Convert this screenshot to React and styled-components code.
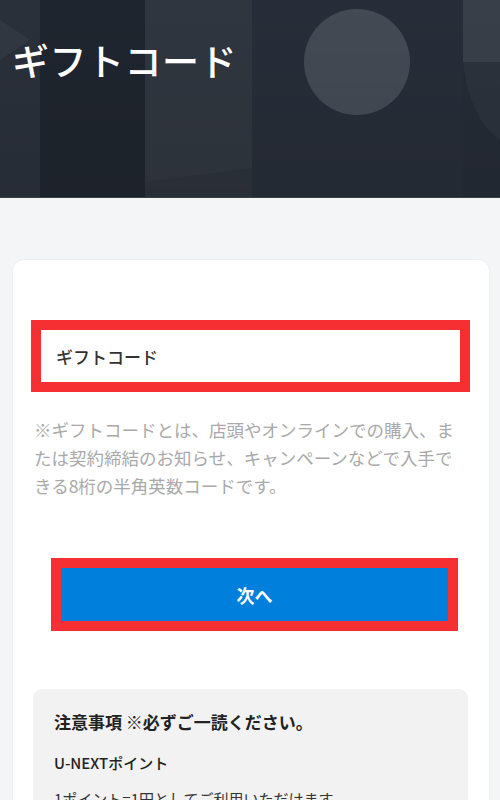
import React from "react";
import styled, { createGlobalStyle } from "styled-components";

const GlobalStyle = createGlobalStyle`
  body {
    margin: 0;
    background: #f4f5f7;
    font-family: "Noto Sans CJK JP", "Noto Sans", sans-serif;
  }
`;

const Page = styled.div`
  width: 500px;
  height: 800px;
  overflow: hidden;
  background: #f4f5f7;
`;

const Hero = styled.header`
  position: relative;
  height: 197px;
  background: #262c36;
  border-bottom: 1px solid #3a404a;
  overflow: hidden;
`;

const HeroArt = styled.svg`
  position: absolute;
  inset: 0;
`;

const HeroTitle = styled.h1`
  position: relative;
  margin: 0;
  padding: 34px 0 0 12px;
  font-size: 37px;
  font-weight: 500;
  line-height: 52px;
  color: #ffffff;
  letter-spacing: 0.5px;
`;

const Body = styled.main`
  padding: 61px 10px 0 12px;
`;

const Card = styled.section`
  background: #ffffff;
  border: 1px solid #eceef1;
  border-radius: 12px;
  padding: 60px 19px 40px 18px;
  display: flex;
  flex-direction: column;
`;

const Highlight = styled.div`
  border: 10px solid #f52f32;
  margin: ${(p) => p.$margin || "0"};
`;

const CodeInput = styled.div`
  height: 52px;
  background: #fff;
  display: flex;
  align-items: center;
  padding-left: 15px;
  font-size: 17px;
  font-weight: 500;
  color: #333;
`;

const Help = styled.p`
  margin: 24px 0 0 3px;
  width: 430px;
  font-size: 17.5px;
  line-height: 28px;
  color: #a9a9a9;
`;

const NextButton = styled.button`
  display: block;
  width: 100%;
  height: 53px;
  border: none;
  padding: 0;
  background: #0080dc;
  color: #fff;
  font-family: inherit;
  font-size: 18px;
  font-weight: 700;
  line-height: 50px;
`;

const Notes = styled.div`
  margin: 58px 2px 0 2px;
  background: #f2f2f2;
  border-radius: 9px;
  padding: 19px 21px;
`;

const NotesTitle = styled.h2`
  margin: 0;
  font-size: 17px;
  font-weight: 700;
  line-height: 28px;
  color: #222;
`;

const NotesHeading = styled.h3`
  margin: 15px 0 0;
  font-size: 15px;
  font-weight: 500;
  line-height: 24px;
  color: #222;
`;

const NotesText = styled.p`
  margin: 12px 0 0;
  font-size: 15px;
  line-height: 24px;
  color: #333;
`;

const App = () => {
  return (
    <Page>
      <GlobalStyle />
      <Hero>
        <HeroArt width="500" height="197" viewBox="0 0 500 197">
          <defs>
            <linearGradient id="fade" x1="0" y1="0" x2="0" y2="1">
              <stop offset="0" stopColor="#000" stopOpacity="0" />
              <stop offset="1" stopColor="#000" stopOpacity="0.08" />
            </linearGradient>
          </defs>
          <rect x="0" y="0" width="40" height="197" fill="#2a303a" />
          <path d="M0 20 L30 40 L0 60 Z" fill="#323842" />
          <rect x="40" y="0" width="105" height="197" fill="#1f252e" />
          <rect x="145" y="0" width="107" height="197" fill="#30363f" />
          <path d="M145 182 L252 168 L252 197 L145 197 Z" fill="#2c323b" />
          <rect x="252" y="0" width="211" height="197" fill="#272d38" />
          <rect x="463" y="0" width="37" height="197" fill="#2c323c" />
          <rect x="463" y="0" width="37" height="62" fill="#393f49" />
          <path d="M463 62 Q470 120 500 140 L500 197 L463 197 Z" fill="#252b35" />
          <circle cx="357" cy="62" r="53" fill="#434a54" />
          <rect x="0" y="0" width="500" height="197" fill="url(#fade)" />
        </HeroArt>
        <HeroTitle>ギフトコード</HeroTitle>
      </Hero>
      <Body>
        <Card>
          <Highlight>
            <CodeInput>ギフトコード</CodeInput>
          </Highlight>
          <Help>
            ※ギフトコードとは、店頭やオンラインでの購入、または契約締結のお知らせ、キャンペーンなどで入手できる8桁の半角英数コードです。
          </Help>
          <Highlight $margin="58px 12px 0 20px">
            <NextButton>次へ</NextButton>
          </Highlight>
          <Notes>
            <NotesTitle>注意事項 ※必ずご一読ください。</NotesTitle>
            <NotesHeading>U-NEXTポイント</NotesHeading>
            <NotesText>1ポイント=1円としてご利用いただけます。</NotesText>
          </Notes>
        </Card>
      </Body>
    </Page>
  );
};

export default App;
